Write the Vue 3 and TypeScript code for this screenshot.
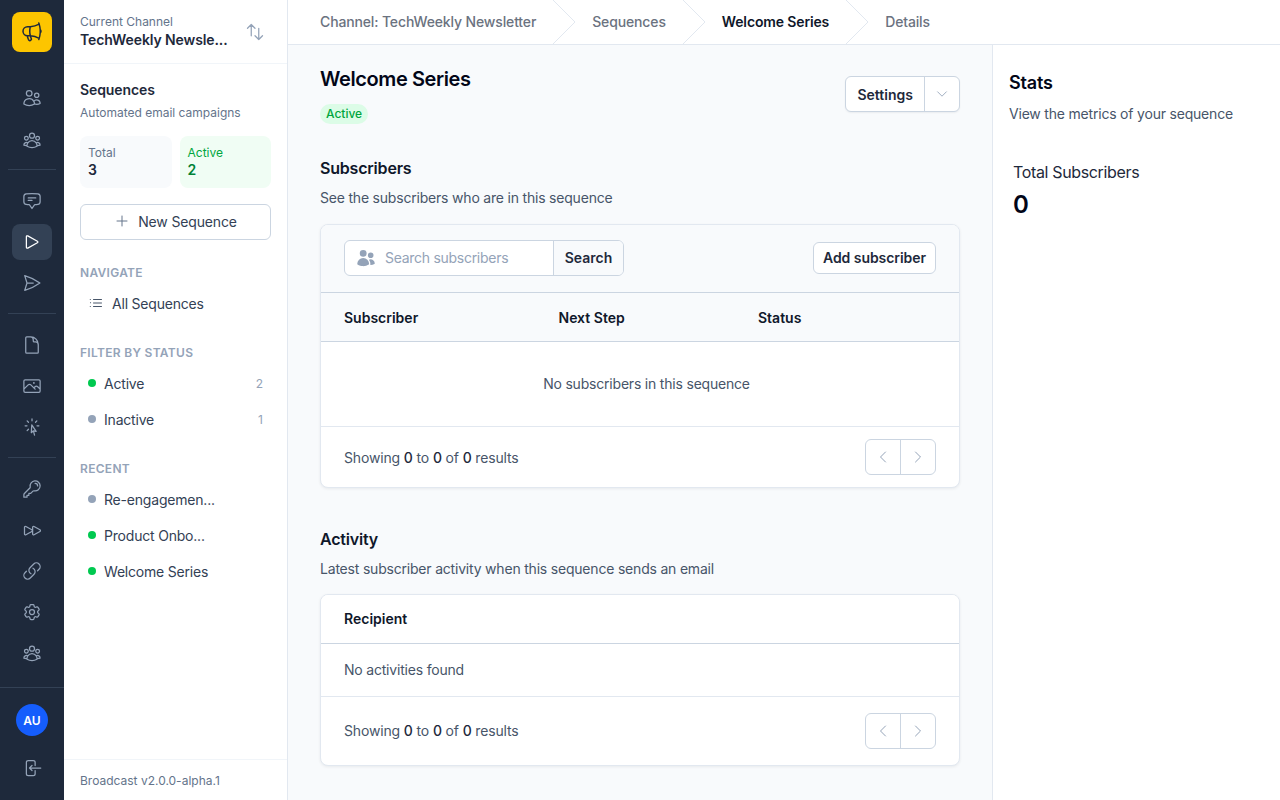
<script setup lang="ts">
interface RailIcon {
  paths: string[]
  active?: boolean
}

const people = [
  'M15 19.128a9.38 9.38 0 0 0 2.625.372 9.337 9.337 0 0 0 4.121-.952 4.125 4.125 0 0 0-7.533-2.493M15 19.128v-.003c0-1.113-.285-2.16-.786-3.07M15 19.128v.106A12.318 12.318 0 0 1 8.624 21c-2.331 0-4.512-.645-6.374-1.766l-.001-.109a6.375 6.375 0 0 1 11.964-3.07M12 6.375a3.375 3.375 0 1 1-6.75 0 3.375 3.375 0 0 1 6.75 0Zm8.25 2.25a2.625 2.625 0 1 1-5.25 0 2.625 2.625 0 0 1 5.25 0Z'
]
const group = [
  'M18 18.72a9.094 9.094 0 0 0 3.741-.479 3 3 0 0 0-4.682-2.72m.94 3.198.001.031c0 .225-.012.447-.037.666A11.944 11.944 0 0 1 12 21c-2.17 0-4.207-.576-5.963-1.584A6.062 6.062 0 0 1 6 18.719m12 0a5.971 5.971 0 0 0-.941-3.197m0 0A5.995 5.995 0 0 0 12 12.75a5.995 5.995 0 0 0-5.058 2.772m0 0a3 3 0 0 0-4.681 2.72 8.986 8.986 0 0 0 3.74.477m.94-3.197a5.971 5.971 0 0 0-.94 3.197M15 6.75a3 3 0 1 1-6 0 3 3 0 0 1 6 0Zm6 3a2.25 2.25 0 1 1-4.5 0 2.25 2.25 0 0 1 4.5 0Zm-13.5 0a2.25 2.25 0 1 1-4.5 0 2.25 2.25 0 0 1 4.5 0Z'
]

const railGroups: RailIcon[][] = [
  [{ paths: people }, { paths: group }],
  [
    { paths: ['M7.5 8.25h9m-9 3H12m-9.75 1.51c0 1.6 1.123 2.994 2.707 3.227 1.129.166 2.27.293 3.423.379.35.026.67.21.865.501L12 21l2.755-4.133a1.14 1.14 0 0 1 .865-.501 48.172 48.172 0 0 0 3.423-.379c1.584-.233 2.707-1.626 2.707-3.228V6.741c0-1.602-1.123-2.995-2.707-3.228A48.394 48.394 0 0 0 12 3c-2.392 0-4.744.175-7.043.513C3.373 3.746 2.25 5.14 2.25 6.741v6.018Z'] },
    { paths: ['M5.25 5.653c0-.856.917-1.398 1.667-.986l11.54 6.347a1.125 1.125 0 0 1 0 1.972l-11.54 6.347a1.125 1.125 0 0 1-1.667-.986V5.653Z'], active: true },
    { paths: ['M6 12 3.269 3.125A59.769 59.769 0 0 1 21.485 12 59.768 59.768 0 0 1 3.27 20.875L5.999 12Zm0 0h7.5'] }
  ],
  [
    { paths: ['M19.5 14.25v-2.625a3.375 3.375 0 0 0-3.375-3.375h-1.5A1.125 1.125 0 0 1 13.5 7.125v-1.5a3.375 3.375 0 0 0-3.375-3.375H8.25m2.25 0H5.625c-.621 0-1.125.504-1.125 1.125v17.25c0 .621.504 1.125 1.125 1.125h12.75c.621 0 1.125-.504 1.125-1.125V11.25a9 9 0 0 0-9-9Z'] },
    { paths: ['m2.25 15.75 5.159-5.159a2.25 2.25 0 0 1 3.182 0l5.159 5.159m-1.5-1.5 1.409-1.409a2.25 2.25 0 0 1 3.182 0l2.909 2.909m-18 3.75h16.5a1.5 1.5 0 0 0 1.5-1.5V6a1.5 1.5 0 0 0-1.5-1.5H3.75A1.5 1.5 0 0 0 2.25 6v12a1.5 1.5 0 0 0 1.5 1.5Zm10.5-11.25h.008v.008h-.008V8.25Zm.375 0a.375.375 0 1 1-.75 0 .375.375 0 0 1 .75 0Z'] },
    { paths: ['M15.042 21.672 13.684 16.6m0 0-2.51 2.225.569-9.47 5.227 7.917-3.286-.672ZM12 2.25V4.5m5.834.166-1.591 1.591M20.25 10.5H18M7.757 14.743l-1.59 1.59M6 10.5H3.75m4.007-4.243-1.59-1.59'] }
  ],
  [
    { paths: ['M15.75 5.25a3 3 0 0 1 3 3m3 0a6 6 0 0 1-7.029 5.912c-.563-.097-1.159.026-1.563.43L10.5 17.25H8.25v2.25H6v2.25H2.25v-2.818c0-.597.237-1.17.659-1.591l6.499-6.499c.404-.404.527-1 .43-1.563A6 6 0 1 1 21.75 8.25Z'] },
    { paths: ['M3 8.689c0-.864.933-1.406 1.683-.977l7.108 4.061a1.125 1.125 0 0 1 0 1.954l-7.108 4.061A1.125 1.125 0 0 1 3 16.811V8.69ZM12.75 8.689c0-.864.933-1.406 1.683-.977l7.108 4.061a1.125 1.125 0 0 1 0 1.954l-7.108 4.061a1.125 1.125 0 0 1-1.683-.977V8.69Z'] },
    { paths: ['M13.19 8.688a4.5 4.5 0 0 1 1.242 7.244l-4.5 4.5a4.5 4.5 0 0 1-6.364-6.364l1.757-1.757m13.35-.622 1.757-1.757a4.5 4.5 0 0 0-6.364-6.364l-4.5 4.5a4.5 4.5 0 0 0 1.242 7.244'] },
    { paths: ['M9.594 3.94c.09-.542.56-.94 1.11-.94h2.593c.55 0 1.02.398 1.11.94l.213 1.281c.063.374.313.686.645.87.074.04.147.083.22.127.325.196.72.257 1.075.124l1.217-.456a1.125 1.125 0 0 1 1.37.49l1.296 2.247a1.125 1.125 0 0 1-.26 1.431l-1.003.827c-.293.241-.438.613-.43.992a7.723 7.723 0 0 1 0 .255c-.008.378.137.75.43.991l1.004.827c.424.35.534.955.26 1.43l-1.298 2.247a1.125 1.125 0 0 1-1.369.491l-1.217-.456c-.355-.133-.75-.072-1.076.124a6.47 6.47 0 0 1-.22.128c-.331.183-.581.495-.644.869l-.213 1.281c-.09.543-.56.94-1.11.94h-2.594c-.55 0-1.019-.398-1.11-.94l-.213-1.281c-.062-.374-.312-.686-.644-.87a6.52 6.52 0 0 1-.22-.127c-.325-.196-.72-.257-1.076-.124l-1.217.456a1.125 1.125 0 0 1-1.369-.49l-1.297-2.247a1.125 1.125 0 0 1 .26-1.431l1.004-.827c.292-.24.437-.613.43-.991a6.932 6.932 0 0 1 0-.255c.007-.38-.138-.751-.43-.992l-1.004-.827a1.125 1.125 0 0 1-.26-1.43l1.297-2.247a1.125 1.125 0 0 1 1.37-.491l1.216.456c.356.133.751.072 1.076-.124.072-.044.146-.086.22-.128.332-.183.582-.495.644-.869l.214-1.28Z', 'M15 12a3 3 0 1 1-6 0 3 3 0 0 1 6 0Z'] },
    { paths: group }
  ]
]

const statusFilters = [
  { label: 'Active', count: 2, on: true },
  { label: 'Inactive', count: 1, on: false }
]

const recent = [
  { label: 'Re-engagemen...', on: false },
  { label: 'Product Onbo...', on: true },
  { label: 'Welcome Series', on: true }
]

const crumbs = [
  { label: 'Channel: TechWeekly Newsletter' },
  { label: 'Sequences' },
  { label: 'Welcome Series', current: true },
  { label: 'Details' }
]
</script>

<template>
  <div class="app">
    <nav class="rail">
      <div class="logo">
        <svg viewBox="0 0 24 24" width="24" height="24" fill="none" stroke="#1e293b" stroke-width="1.5" stroke-linecap="round" stroke-linejoin="round">
          <path d="M10.34 15.84c-.688-.06-1.386-.09-2.09-.09H7.5a4.5 4.5 0 1 1 0-9h.75c.704 0 1.402-.03 2.09-.09m0 9.18c.253.962.584 1.892.985 2.783.247.55.06 1.21-.463 1.511l-.657.38c-.551.318-1.26.117-1.527-.461a20.845 20.845 0 0 1-1.44-4.282m3.102.069a18.03 18.03 0 0 1-.59-4.59c0-1.586.205-3.124.59-4.59m0 9.18a23.848 23.848 0 0 1 8.835 2.535M10.34 6.66a23.847 23.847 0 0 0 8.835-2.535m0 0A23.74 23.74 0 0 0 18.795 3m.38 1.125a23.91 23.91 0 0 1 1.014 5.395m-1.014 8.855c-.118.38-.245.754-.38 1.125m.38-1.125a23.91 23.91 0 0 0 1.014-5.395m0-3.46c.495.413.811 1.035.811 1.73 0 .695-.316 1.317-.811 1.73m0-3.46a24.347 24.347 0 0 1 0 3.46" />
        </svg>
      </div>
      <div v-for="(items, i) in railGroups" :key="i" class="rail-group">
        <a v-for="(item, j) in items" :key="j" class="rail-item" :class="{ active: item.active }">
          <svg viewBox="0 0 24 24" width="20" height="20" fill="none" stroke="currentColor" stroke-width="1.5" stroke-linecap="round" stroke-linejoin="round">
            <path v-for="d in item.paths" :key="d" :d="d" />
          </svg>
        </a>
      </div>
      <div class="rail-foot">
        <div class="avatar">AU</div>
        <a class="rail-item">
          <svg viewBox="0 0 24 24" width="20" height="20" fill="none" stroke="currentColor" stroke-width="1.5" stroke-linecap="round" stroke-linejoin="round">
            <path d="M15.75 9V5.25A2.25 2.25 0 0 0 13.5 3h-6a2.25 2.25 0 0 0-2.25 2.25v13.5A2.25 2.25 0 0 0 7.5 21h6a2.25 2.25 0 0 0 2.25-2.25V15M12 9l-3 3m0 0 3 3m-3-3h13.5" />
          </svg>
        </a>
      </div>
    </nav>

    <aside class="side">
      <div class="channel">
        <div class="channel-text">
          <div class="channel-label">Current Channel</div>
          <div class="channel-name">TechWeekly Newsle...</div>
        </div>
        <svg class="swap" viewBox="0 0 24 24" width="20" height="20" fill="none" stroke="currentColor" stroke-width="1.5" stroke-linecap="round" stroke-linejoin="round">
          <path d="M3 7.5 7.5 3m0 0L12 7.5M7.5 3v13.5m13.5 0L16.5 21m0 0L12 16.5m4.5 4.5V7.5" />
        </svg>
      </div>

      <div class="side-body">
        <div class="side-title">Sequences</div>
        <div class="side-sub">Automated email campaigns</div>

        <div class="tiles">
          <div class="tile">
            <div class="tile-label">Total</div>
            <div class="tile-value">3</div>
          </div>
          <div class="tile green">
            <div class="tile-label">Active</div>
            <div class="tile-value">2</div>
          </div>
        </div>

        <button class="new-btn">
          <svg viewBox="0 0 24 24" width="16" height="16" fill="none" stroke="#64748b" stroke-width="1.5" stroke-linecap="round">
            <path d="M12 4.5v15m7.5-7.5h-15" />
          </svg>
          New Sequence
        </button>

        <div class="side-heading first">NAVIGATE</div>
        <div class="side-link">
          <svg viewBox="0 0 24 24" width="16" height="16" fill="none" stroke="#475569" stroke-width="1.5" stroke-linecap="round" stroke-linejoin="round">
            <path d="M8.25 6.75h12M8.25 12h12m-12 5.25h12M3.75 6.75h.007v.008H3.75V6.75Zm0 5.25h.007v.008H3.75V12Zm0 5.25h.007v.008H3.75v-.008Z" />
          </svg>
          All Sequences
        </div>

        <div class="side-heading">FILTER BY STATUS</div>
        <div v-for="f in statusFilters" :key="f.label" class="side-link">
          <span class="dot" :class="{ on: f.on }"></span>
          <span class="grow">{{ f.label }}</span>
          <span class="count">{{ f.count }}</span>
        </div>

        <div class="side-heading">RECENT</div>
        <div v-for="r in recent" :key="r.label" class="side-link">
          <span class="dot" :class="{ on: r.on }"></span>
          <span class="grow">{{ r.label }}</span>
        </div>
      </div>

      <div class="version">Broadcast v2.0.0-alpha.1</div>
    </aside>

    <div class="page">
      <header class="crumbs">
        <template v-for="(c, i) in crumbs" :key="c.label">
          <span class="crumb" :class="{ current: c.current }">{{ c.label }}</span>
          <svg v-if="i < crumbs.length - 1" class="crumb-sep" viewBox="0 0 22 44" width="22" height="44" fill="none" stroke="#e2e8f0">
            <path d="M0 0 22 22 0 44" />
          </svg>
        </template>
      </header>

      <div class="columns">
        <main class="main">
          <div class="title-row">
            <div>
              <h1>Welcome Series</h1>
              <span class="badge">Active</span>
            </div>
            <div class="split">
              <span class="split-main">Settings</span>
              <span class="split-caret">
                <svg viewBox="0 0 24 24" width="14" height="14" fill="none" stroke="#94a3b8" stroke-width="1.5" stroke-linecap="round" stroke-linejoin="round">
                  <path d="m19.5 8.25-7.5 7.5-7.5-7.5" />
                </svg>
              </span>
            </div>
          </div>

          <h2>Subscribers</h2>
          <p class="section-sub">See the subscribers who are in this sequence</p>

          <section class="card">
            <div class="toolbar">
              <div class="search">
                <span class="search-input">
                  <svg viewBox="0 0 24 24" width="20" height="20" fill="#94a3b8">
                    <path d="M4.5 6.375a4.125 4.125 0 1 1 8.25 0 4.125 4.125 0 0 1-8.25 0ZM14.25 8.625a3.375 3.375 0 1 1 6.75 0 3.375 3.375 0 0 1-6.75 0ZM1.5 19.125a7.125 7.125 0 0 1 14.25 0v.003l-.001.119a.75.75 0 0 1-.363.63 13.067 13.067 0 0 1-6.761 1.873c-2.472 0-4.786-.684-6.76-1.873a.75.75 0 0 1-.364-.63l-.001-.122ZM17.25 19.128l-.001.144a2.25 2.25 0 0 1-.233.96 10.088 10.088 0 0 0 5.06-1.01.75.75 0 0 0 .42-.643 4.875 4.875 0 0 0-6.957-4.611 8.586 8.586 0 0 1 1.71 5.157v.003Z" />
                  </svg>
                  Search subscribers
                </span>
                <span class="search-btn">Search</span>
              </div>
              <button class="add-btn">Add subscriber</button>
            </div>
            <div class="head-row">
              <span class="col-a">Subscriber</span>
              <span class="col-b">Next Step</span>
              <span>Status</span>
            </div>
            <div class="empty">No subscribers in this sequence</div>
            <div class="foot">
              <span>Showing <b>0</b> to <b>0</b> of <b>0</b> results</span>
              <div class="pager">
                <span>
                  <svg viewBox="0 0 24 24" width="16" height="16" fill="none" stroke="#94a3b8" stroke-width="1.5" stroke-linecap="round" stroke-linejoin="round"><path d="M15.75 19.5 8.25 12l7.5-7.5" /></svg>
                </span>
                <span>
                  <svg viewBox="0 0 24 24" width="16" height="16" fill="none" stroke="#94a3b8" stroke-width="1.5" stroke-linecap="round" stroke-linejoin="round"><path d="m8.25 4.5 7.5 7.5-7.5 7.5" /></svg>
                </span>
              </div>
            </div>
          </section>

          <h2 class="second">Activity</h2>
          <p class="section-sub">Latest subscriber activity when this sequence sends an email</p>

          <section class="card">
            <div class="head-row white">Recipient</div>
            <div class="none">No activities found</div>
            <div class="foot tall">
              <span>Showing <b>0</b> to <b>0</b> of <b>0</b> results</span>
              <div class="pager">
                <span>
                  <svg viewBox="0 0 24 24" width="16" height="16" fill="none" stroke="#94a3b8" stroke-width="1.5" stroke-linecap="round" stroke-linejoin="round"><path d="M15.75 19.5 8.25 12l7.5-7.5" /></svg>
                </span>
                <span>
                  <svg viewBox="0 0 24 24" width="16" height="16" fill="none" stroke="#94a3b8" stroke-width="1.5" stroke-linecap="round" stroke-linejoin="round"><path d="m8.25 4.5 7.5 7.5-7.5 7.5" /></svg>
                </span>
              </div>
            </div>
          </section>
        </main>

        <aside class="stats">
          <div class="stats-title">Stats</div>
          <div class="stats-sub">View the metrics of your sequence</div>
          <div class="metric">
            <div class="metric-label">Total Subscribers</div>
            <div class="metric-value">0</div>
          </div>
        </aside>
      </div>
    </div>
  </div>
</template>

<style>
html, body {
  margin: 0;
  height: 100%;
  overflow: hidden;
}
</style>

<style scoped>
.app {
  display: flex;
  width: 1280px;
  height: 800px;
  overflow: hidden;
  background: #fff;
  font-family: Inter, "Liberation Sans", sans-serif;
  font-size: 14px;
  letter-spacing: -0.2px;
  color: #0f172a;
}

/* rail */
.rail {
  width: 64px;
  flex: none;
  background: #1e293b;
  display: flex;
  flex-direction: column;
  align-items: center;
  box-sizing: border-box;
  padding-top: 12px;
  height: 800px;
}
.logo {
  width: 40px;
  height: 40px;
  border-radius: 8px;
  background: #fdc500;
  display: flex;
  align-items: center;
  justify-content: center;
  margin-bottom: 28px;
}
.rail-group {
  width: 48px;
  display: flex;
  flex-direction: column;
  align-items: center;
  gap: 5px;
  padding-bottom: 12px;
  margin-bottom: 13px;
  border-bottom: 1px solid #334155;
}
.rail-group:nth-of-type(2) {
  gap: 6px;
  padding-bottom: 11px;
}
.rail-group:nth-of-type(5) {
  border-bottom: none;
  margin-bottom: 0;
}
.rail-item {
  width: 40px;
  height: 36px;
  border-radius: 8px;
  display: flex;
  align-items: center;
  justify-content: center;
  color: #94a3b8;
}
.rail-item.active {
  background: #334155;
  color: #fff;
}
.rail-foot {
  margin-top: auto;
  width: 64px;
  height: 113px;
  box-sizing: border-box;
  border-top: 1px solid #334155;
  display: flex;
  flex-direction: column;
  align-items: center;
  padding-top: 16px;
  gap: 14px;
}
.avatar {
  width: 32px;
  height: 32px;
  border-radius: 50%;
  background: #155dfc;
  color: #fff;
  font-size: 12px;
  font-weight: 600;
  letter-spacing: 0;
  display: flex;
  align-items: center;
  justify-content: center;
}

/* sidebar */
.side {
  width: 224px;
  flex: none;
  box-sizing: border-box;
  border-right: 1px solid #e2e8f0;
  display: flex;
  flex-direction: column;
  height: 800px;
}
.channel {
  height: 64px;
  box-sizing: border-box;
  flex: none;
  border-bottom: 1px solid #f1f5f9;
  display: flex;
  align-items: center;
  justify-content: space-between;
  padding: 0 22px 0 16px;
}
.channel-label {
  font-size: 12px;
  line-height: 16px;
  letter-spacing: 0;
  color: #64748b;
}
.channel-name {
  font-size: 14px;
  line-height: 20px;
  font-weight: 600;
  letter-spacing: -0.1px;
  color: #1e293b;
}
.swap {
  color: #94a3b8;
}
.side-body {
  flex: 1;
  padding: 16px;
  min-height: 0;
}
.side-title {
  font-size: 14px;
  line-height: 20px;
  font-weight: 600;
  letter-spacing: -0.1px;
  color: #1e293b;
}
.side-sub {
  font-size: 12px;
  line-height: 16px;
  letter-spacing: 0;
  margin-top: 5px;
  color: #64748b;
}
.tiles {
  display: grid;
  grid-template-columns: 1fr 1fr;
  gap: 8px;
  margin-top: 15px;
}
.tile {
  background: #f8fafc;
  border-radius: 8px;
  height: 52px;
  box-sizing: border-box;
  padding: 9px 8px;
}
.tile-label {
  font-size: 12px;
  line-height: 16px;
  letter-spacing: 0;
  color: #64748b;
}
.tile-value {
  font-size: 14px;
  line-height: 18px;
  font-weight: 600;
  color: #1e293b;
}
.tile.green {
  background: #f0fdf4;
}
.tile.green .tile-label {
  color: #00a63e;
}
.tile.green .tile-value {
  color: #008236;
}
.new-btn {
  width: 100%;
  height: 36px;
  margin-top: 16px;
  padding: 0 0 2px;
  background: #fff;
  border: 1px solid #cbd5e1;
  border-radius: 6px;
  font: inherit;
  letter-spacing: -0.15px;
  color: #334155;
  display: flex;
  align-items: center;
  justify-content: center;
  gap: 8px;
}
.side-heading {
  font-size: 12px;
  line-height: 16px;
  font-weight: 600;
  letter-spacing: 0.3px;
  color: #94a3b8;
  margin-top: 24px;
  margin-bottom: 4px;
}
.side-heading.first {
  margin-top: 25px;
}
.side-link {
  height: 36px;
  display: flex;
  align-items: center;
  gap: 8px;
  padding: 0 8px;
  color: #334155;
}
.grow {
  flex: 1;
}
.dot {
  width: 8px;
  height: 8px;
  border-radius: 50%;
  background: #94a3b8;
}
.dot.on {
  background: #00c950;
}
.count {
  font-size: 12px;
  letter-spacing: 0;
  color: #94a3b8;
}
.version {
  height: 41px;
  box-sizing: border-box;
  flex: none;
  border-top: 1px solid #f1f5f9;
  padding: 13px 16px 0;
  font-size: 12px;
  line-height: 16px;
  letter-spacing: 0;
  color: #64748b;
}

/* page */
.page {
  flex: 1;
  min-width: 0;
  display: flex;
  flex-direction: column;
}
.crumbs {
  height: 45px;
  flex: none;
  box-sizing: border-box;
  border-bottom: 1px solid #e2e8f0;
  padding-left: 32px;
  display: flex;
  align-items: center;
  gap: 17px;
  background: #fff;
}
.crumb {
  color: #6b7280;
  font-weight: 500;
  letter-spacing: -0.14px;
  padding-bottom: 2px;
}
.crumb.current {
  color: #0f172a;
  font-weight: 600;
}
.columns {
  flex: 1;
  display: flex;
  min-height: 0;
}
.main {
  flex: 1;
  min-width: 0;
  background: #f8fafc;
  padding: 20px 32px;
  overflow: hidden;
}
.title-row {
  display: flex;
  justify-content: space-between;
  align-items: flex-start;
}
h1 {
  margin: 0 0 11px;
  font-size: 20px;
  line-height: 28px;
  font-weight: 600;
  letter-spacing: -0.4px;
  color: #020617;
}
.badge {
  display: block;
  width: fit-content;
  padding: 0 6px;
  line-height: 20px;
  border-radius: 10px;
  background: #dcfce7;
  color: #00a63e;
  font-size: 12px;
  font-weight: 500;
  letter-spacing: 0;
}
.split {
  display: flex;
  height: 36px;
  margin-top: 11px;
  box-sizing: border-box;
  background: #fff;
  border: 1px solid #cbd5e1;
  border-radius: 6px;
  box-shadow: 0 1px 2px rgba(15, 23, 42, 0.06);
}
.split-main {
  padding: 0 11px;
  display: flex;
  align-items: center;
  font-weight: 600;
  letter-spacing: 0;
  color: #1e293b;
}
.split-caret {
  width: 34px;
  border-left: 1px solid #cbd5e1;
  display: flex;
  align-items: center;
  justify-content: center;
}
h2 {
  margin: 32px 0 0;
  font-size: 16px;
  line-height: 24px;
  font-weight: 600;
  color: #0f172a;
}
h2.second {
  margin-top: 39px;
}
.section-sub {
  margin: 8px 0 16px;
  line-height: 20px;
  color: #475569;
}
.second + .section-sub {
  margin-bottom: 15px;
}
.card {
  background: #fff;
  border: 1px solid #e2e8f0;
  border-radius: 8px;
  overflow: hidden;
  box-shadow: 0 1px 3px rgba(15, 23, 42, 0.07);
}
.toolbar {
  height: 68px;
  box-sizing: border-box;
  background: #f8fafc;
  padding: 0 23px 2px;
  display: flex;
  align-items: center;
  justify-content: space-between;
  border-bottom: 1px solid #cbd5e1;
}
.search {
  display: flex;
  width: 280px;
  height: 36px;
  box-sizing: border-box;
  background: #fff;
  border: 1px solid #cbd5e1;
  border-radius: 6px;
  overflow: hidden;
}
.search-input {
  flex: 1;
  display: flex;
  align-items: center;
  gap: 9px;
  padding-left: 11px;
  letter-spacing: -0.28px;
  color: #94a3b8;
}
.search-btn {
  width: 69px;
  background: #f8fafc;
  border-left: 1px solid #cbd5e1;
  display: flex;
  align-items: center;
  justify-content: center;
  font-weight: 600;
  letter-spacing: 0;
  color: #1e293b;
}
.add-btn {
  height: 32px;
  width: 123px;
  padding: 0;
  background: #fff;
  border: 1px solid #cbd5e1;
  border-radius: 6px;
  font: inherit;
  font-weight: 600;
  letter-spacing: -0.05px;
  color: #1e293b;
}
.head-row {
  height: 49px;
  box-sizing: border-box;
  padding: 0 23px;
  background: #f8fafc;
  border-bottom: 1px solid #cbd5e1;
  display: flex;
  align-items: center;
  font-weight: 600;
  letter-spacing: 0;
  color: #0f172a;
}
.head-row.white {
  background: #fff;
  padding-bottom: 2px;
}
.col-a {
  width: 214.5px;
}
.col-b {
  width: 199.5px;
}
.empty {
  height: 85px;
  box-sizing: border-box;
  border-bottom: 1px solid #e2e8f0;
  display: flex;
  align-items: center;
  justify-content: center;
  padding: 0 0 2px 13px;
  color: #475569;
}
.none {
  height: 53px;
  box-sizing: border-box;
  padding: 0 23px 2px;
  border-bottom: 1px solid #e2e8f0;
  display: flex;
  align-items: center;
  color: #475569;
}
.foot {
  height: 60px;
  box-sizing: border-box;
  padding: 0 23px;
  display: flex;
  align-items: center;
  justify-content: space-between;
  letter-spacing: -0.15px;
  color: #475569;
}
.foot b {
  font-weight: 500;
  color: #1e293b;
}
.foot.tall {
  height: 68px;
}
.foot.tall > span {
  padding-bottom: 2px;
}
.pager {
  display: flex;
  height: 36px;
  width: 71px;
  box-sizing: border-box;
  border: 1px solid #cbd5e1;
  border-radius: 6px;
}
.pager span {
  flex: 1;
  display: flex;
  align-items: center;
  justify-content: center;
}
.pager span + span {
  border-left: 1px solid #cbd5e1;
}

/* stats */
.stats {
  width: 288px;
  flex: none;
  box-sizing: border-box;
  background: #fff;
  border-left: 1px solid #e2e8f0;
  padding: 26px 16px;
}
.stats-title {
  font-size: 18px;
  line-height: 24px;
  font-weight: 600;
  letter-spacing: -0.2px;
  color: #020617;
}
.stats-sub {
  margin-top: 9px;
  line-height: 20px;
  color: #475569;
}
.metric {
  margin-top: 36px;
  padding-left: 4px;
}
.metric-label {
  font-size: 16px;
  line-height: 24px;
  letter-spacing: -0.35px;
  color: #1e293b;
}
.metric-value {
  margin-top: 5px;
  font-size: 24px;
  line-height: 32px;
  font-weight: 600;
  letter-spacing: 0;
  color: #020617;
}
</style>
